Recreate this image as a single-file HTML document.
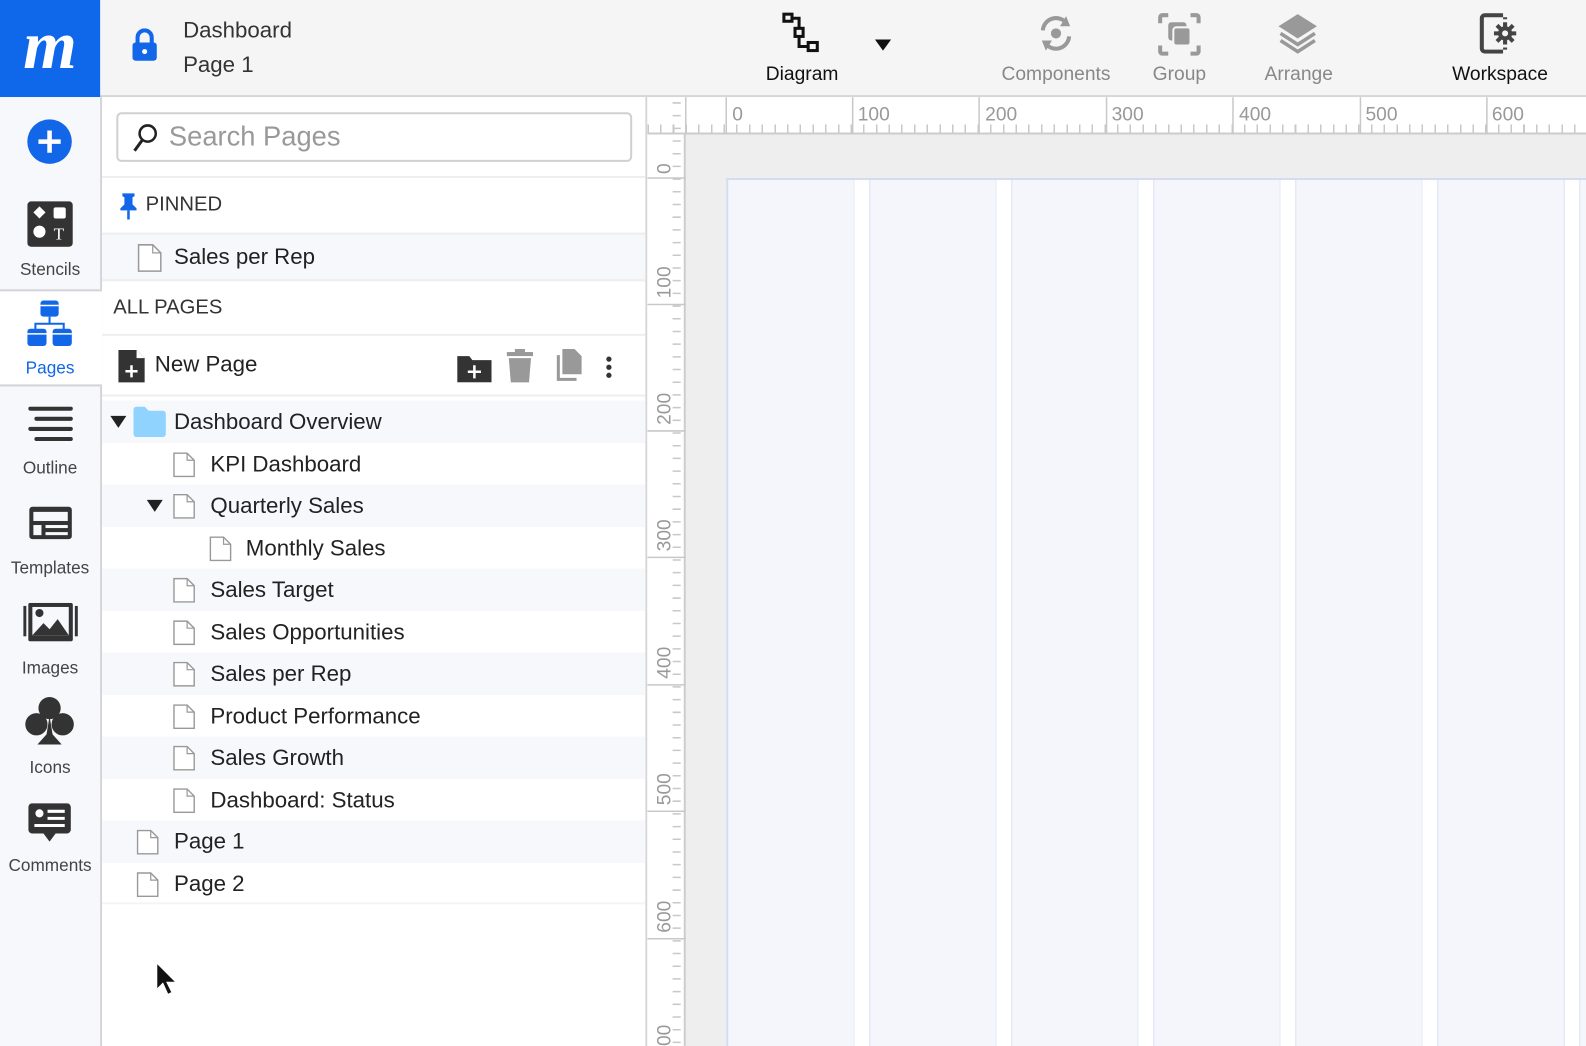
<!DOCTYPE html>
<html><head><meta charset="utf-8"><style>
*{box-sizing:border-box;margin:0;padding:0}
html,body{width:1586px;height:1046px;overflow:hidden;background:#fff;font-family:"Liberation Sans",sans-serif;color:#222}
#w{position:absolute;left:0;top:0;width:1568px;height:1034px;transform:scale(1.01148,1.0116);transform-origin:0 0;overflow:hidden}
.a{position:absolute}
.top{left:0;top:0;width:1568px;height:96px;background:#f5f5f5;border-bottom:2px solid #d6d6d6}
.logo{left:0;top:0;width:99px;height:96px;background:#0f67ea;color:#fff;font:italic bold 68px "Liberation Serif",serif;text-align:center;line-height:88px}
.rail{left:0;top:96px;width:101px;height:938px;background:#f7f8fc;border-right:2px solid #d3d3d8}
.rl{position:absolute;left:0;width:99px;text-align:center;font-size:17px;color:#444}
.panel{left:101px;top:96px;width:539px;height:938px;background:#fff;border-right:2px solid #d6d6d6}
.row{position:absolute;left:0;width:537px;height:41.5px;font-size:22px;line-height:41.5px;color:#222}
.sh{background:#f7f8fc}
.pg{position:absolute;top:9px;width:22px;height:25px}
.tb{position:absolute;font-size:19px;text-align:center}
</style></head><body><div id="w">
<div class="a top"></div>
<div class="a logo">m</div>
<svg class="a" style="left:129px;top:28px" width="28" height="34" viewBox="0 0 28 34"><path d="M7 15V9a7 7 0 0114 0v6" fill="none" stroke="#1266e8" stroke-width="4"/><rect x="2" y="14" width="24" height="18" rx="3" fill="#1266e8"/><circle cx="14" cy="23" r="2.5" fill="#fff"/></svg>
<div class="a" style="left:181px;top:17px;font-size:22px;color:#333">Dashboard</div>
<div class="a" style="left:181px;top:51px;font-size:22px;color:#333">Page 1</div>
<svg class="a" style="left:772px;top:12px" width="42" height="42" viewBox="0 0 42 42"><g fill="none" stroke="#111" stroke-width="3"><rect x="3" y="2" width="8" height="7"/><rect x="14" y="16" width="8" height="8"/><rect x="27" y="30" width="9" height="8"/><path d="M11 6h7v10M18 24v10h9"/></g></svg>
<svg class="a" style="left:865px;top:39px" width="16" height="11"><path d="M0 0h16L8 11z" fill="#111"/></svg>
<div class="tb" style="left:745px;top:63px;width:96px;color:#111">Diagram</div>
<svg class="a" style="left:1024px;top:12px" width="40" height="42" viewBox="0 0 40 42"><g fill="none" stroke="#999" stroke-width="4"><path d="M7 18a13 13 0 0124-6M33 24a13 13 0 01-24 6"/></g><path d="M30 4l4 10-10 0z M10 38l-4-10 10 0z" fill="#999"/><circle cx="20" cy="21" r="5" fill="#999"/></svg>
<div class="tb" style="left:976px;top:63px;width:136px;color:#888">Components</div>
<svg class="a" style="left:1144px;top:12px" width="44" height="44" viewBox="0 0 44 44"><g fill="none" stroke="#999" stroke-width="4"><path d="M3 11V5a2 2 0 012-2h6M33 3h6a2 2 0 012 2v6M41 33v6a2 2 0 01-2 2h-6M11 41H5a2 2 0 01-2-2v-6"/></g><rect x="11" y="10" width="18" height="18" rx="3" fill="#999"/><rect x="16" y="15" width="17" height="18" rx="3" fill="#999" stroke="#f5f5f5" stroke-width="2"/></svg>
<div class="tb" style="left:1126px;top:63px;width:80px;color:#888">Group</div>
<svg class="a" style="left:1262px;top:12px" width="42" height="42" viewBox="0 0 42 42"><path d="M21 2L40 14 21 26 2 14z" fill="#999"/><path d="M4 21l17 11 17-11M4 28l17 11 17-11" fill="none" stroke="#999" stroke-width="3.5"/></svg>
<div class="tb" style="left:1236px;top:63px;width:96px;color:#888">Arrange</div>
<svg class="a" style="left:1462px;top:13px" width="42" height="40" viewBox="0 0 42 40"><path d="M22 4V2H6a3 3 0 00-3 3v30a3 3 0 003 3h16v-2" fill="none" stroke="#444" stroke-width="4"/><path d="M26 4v2M26 34v2" stroke="#444" stroke-width="4"/><circle cx="26" cy="20" r="7" fill="#444"/><g stroke="#444" stroke-width="4"><path d="M26 9v22M15 20h22M18 12l16 16M34 12L18 28"/></g><circle cx="26" cy="20" r="3" fill="#f5f5f5"/></svg>
<div class="tb" style="left:1418px;top:63px;width:130px;color:#111">Workspace</div>

<div class="a rail"></div>
<svg class="a" style="left:26px;top:117px" width="46" height="46"><circle cx="23" cy="23" r="22" fill="#1266e8"/><path d="M23 12v22M12 23h22" stroke="#fff" stroke-width="4.5"/></svg>
<svg class="a" style="left:27px;top:199px" width="45" height="45"><rect width="45" height="45" rx="4" fill="#333"/><path d="M12 5l6 6-6 6-6-6z" fill="#fff"/><rect x="26" y="6" width="12" height="11" rx="2" fill="#fff"/><circle cx="12" cy="30" r="6" fill="#fff"/><text x="26" y="38" font-size="17" font-family="Liberation Serif" fill="#fff">T</text></svg>
<div class="rl" style="top:257px">Stencils</div>
<div class="a" style="left:0;top:286px;width:101px;height:96px;background:#fff;border-top:2px solid #d3d3d8;border-bottom:2px solid #d3d3d8"></div>
<svg class="a" style="left:27px;top:296px" width="46" height="48"><rect x="13" y="1" width="18" height="16" rx="3" fill="#1266e8"/><path d="M22 17v6M8 30v-6h28v6" stroke="#1266e8" stroke-width="2" fill="none"/><rect x="0" y="29" width="19" height="17" rx="3" fill="#1266e8"/><rect x="25" y="29" width="19" height="17" rx="3" fill="#1266e8"/><path d="M13 6h18M0 34h19M25 34h19" stroke="#fff" stroke-width="1.5"/></svg>
<div class="rl" style="top:354px;color:#1266e8">Pages</div>
<svg class="a" style="left:27px;top:402px" width="46" height="36"><g stroke="#333" stroke-width="4" stroke-linecap="round"><path d="M3 2h40M9 12h34M3 22h40M9 32h34"/></g></svg>
<div class="rl" style="top:453px">Outline</div>
<svg class="a" style="left:27px;top:499px" width="46" height="36"><rect x="2" y="2" width="42" height="32" rx="3" fill="#333"/><rect x="6" y="7" width="34" height="9" fill="#f7f8fc"/><rect x="6" y="20" width="8" height="10" fill="#f7f8fc"/><rect x="18" y="20" width="22" height="3" fill="#f7f8fc"/><rect x="18" y="27" width="22" height="3" fill="#f7f8fc"/></svg>
<div class="rl" style="top:552px">Templates</div>
<svg class="a" style="left:23px;top:596px" width="54" height="38"><rect x="0" y="3" width="3" height="30" fill="#333"/><rect x="51" y="3" width="3" height="30" fill="#333"/><rect x="5" y="0" width="44" height="38" rx="2" fill="#333"/><rect x="9" y="4" width="36" height="28" fill="#f7f8fc"/><path d="M9 32l11-12 6 6 8-10 11 16z" fill="#333"/><circle cx="16" cy="10" r="4" fill="#333"/></svg>
<div class="rl" style="top:651px">Images</div>
<svg class="a" style="left:24px;top:688px" width="50" height="50"><circle cx="25" cy="12" r="11" fill="#333"/><circle cx="12" cy="28" r="11" fill="#333"/><circle cx="38" cy="28" r="11" fill="#333"/><path d="M25 20l-3 18-9 10h24l-9-10z" fill="#333"/></svg>
<div class="rl" style="top:749px">Icons</div>
<svg class="a" style="left:28px;top:794px" width="44" height="40"><rect x="0" y="0" width="42" height="30" rx="4" fill="#333"/><path d="M15 30h12l-6 8z" fill="#333"/><circle cx="11" cy="10" r="4" fill="#fff"/><path d="M19 8h17M19 15h17M6 22h30" stroke="#fff" stroke-width="3"/></svg>
<div class="rl" style="top:846px">Comments</div>

<div class="a panel">
<div class="a" style="left:14px;top:15px;width:510px;height:49px;border:2px solid #d0d0d0;border-radius:5px"></div>
<svg class="a" style="left:30px;top:25px" width="26" height="30"><circle cx="15" cy="11" r="8" fill="none" stroke="#222" stroke-width="2.5"/><path d="M10 17L2 28" stroke="#222" stroke-width="3"/></svg>
<div class="a" style="left:66px;top:24px;font-size:27px;color:#999">Search Pages</div>
<div class="a" style="left:0;top:78px;width:537px;height:2px;background:#eee"></div>
<svg class="a" style="left:17px;top:95px" width="18" height="26"><path d="M3 0h12v3l-2 1v7l4 4v2H1v-2l4-4V4L3 3z" fill="#1266e8"/><path d="M9 17v9" stroke="#1266e8" stroke-width="2.5"/></svg>
<div class="a" style="left:43px;top:95px;font-size:20px;color:#333">PINNED</div>
<div class="a sh" style="left:0;top:134px;width:537px;height:48px;border-top:2px solid #eee;border-bottom:2px solid #eee"></div>
<svg class="a" style="left:35px;top:145px" width="24" height="28"><path d="M1 1h14l8 8v18H1z" fill="#fff" stroke="#999" stroke-width="1.5"/><path d="M15 1v8h8" fill="none" stroke="#999" stroke-width="1.2"/></svg>
<div class="a" style="left:71px;top:145px;font-size:22px">Sales per Rep</div>
<div class="a" style="left:11px;top:197px;font-size:20px;color:#333">ALL PAGES</div>
<div class="a" style="left:0;top:234px;width:537px;height:2px;background:#eee"></div>
<svg class="a" style="left:16px;top:249px" width="28" height="34"><path d="M0 1h18l8 8v24H0z" fill="#333"/><path d="M18 1v8h8" fill="#fff"/><path d="M13 16v12M7 22h12" stroke="#fff" stroke-width="2.5"/></svg>
<div class="a" style="left:52px;top:251px;font-size:22px;color:#222">New Page</div>
<svg class="a" style="left:351px;top:254px" width="34" height="28"><path d="M0 2h12l3 4h19v22H0z" fill="#333"/><path d="M17 11v13M10.5 17.5h13" stroke="#fff" stroke-width="2.5"/></svg>
<svg class="a" style="left:400px;top:249px" width="26" height="34"><rect x="0" y="3" width="26" height="4" fill="#999"/><rect x="8" y="0" width="10" height="4" fill="#999"/><path d="M2 9h22l-2 24H4z" fill="#999"/></svg>
<svg class="a" style="left:447px;top:249px" width="28" height="32"><path d="M8 0h12l7 7v18H8z" fill="#999"/><path d="M4 6v24h18" fill="none" stroke="#999" stroke-width="3"/></svg>
<svg class="a" style="left:497px;top:256px" width="8" height="24"><circle cx="4" cy="3" r="2.6" fill="#333"/><circle cx="4" cy="11" r="2.6" fill="#333"/><circle cx="4" cy="19" r="2.6" fill="#333"/></svg>
<div class="a" style="left:0;top:294px;width:537px;height:2px;background:#eee"></div>

<div class="row sh" style="top:300px"><svg class="a" style="left:8px;top:15px" width="16" height="12"><path d="M0 0h16L8 12z" fill="#222"/></svg><svg class="a" style="left:31px;top:6px" width="32" height="30"><path d="M0 3a3 3 0 013-3h8l4 4h14a3 3 0 013 3v20a3 3 0 01-3 3H3a3 3 0 01-3-3z" fill="#8fd3fe"/></svg><span class="a" style="left:71px">Dashboard Overview</span></div>
<div class="row" style="top:341.5px"><svg class="pg" style="left:70px" viewBox="0 0 22 25"><path d="M1 1h13l7 7v16H1z" fill="#fff" stroke="#999" stroke-width="1.4"/><path d="M14 1v7h7" fill="none" stroke="#999" stroke-width="1.2"/></svg><span class="a" style="left:107px">KPI Dashboard</span></div>
<div class="row sh" style="top:383px"><svg class="a" style="left:44px;top:15px" width="16" height="12"><path d="M0 0h16L8 12z" fill="#222"/></svg><svg class="pg" style="left:70px" viewBox="0 0 22 25"><path d="M1 1h13l7 7v16H1z" fill="#fff" stroke="#999" stroke-width="1.4"/><path d="M14 1v7h7" fill="none" stroke="#999" stroke-width="1.2"/></svg><span class="a" style="left:107px">Quarterly Sales</span></div>
<div class="row" style="top:424.5px"><svg class="pg" style="left:106px" viewBox="0 0 22 25"><path d="M1 1h13l7 7v16H1z" fill="#fff" stroke="#999" stroke-width="1.4"/><path d="M14 1v7h7" fill="none" stroke="#999" stroke-width="1.2"/></svg><span class="a" style="left:142px">Monthly Sales</span></div>
<div class="row sh" style="top:466px"><svg class="pg" style="left:70px" viewBox="0 0 22 25"><path d="M1 1h13l7 7v16H1z" fill="#fff" stroke="#999" stroke-width="1.4"/><path d="M14 1v7h7" fill="none" stroke="#999" stroke-width="1.2"/></svg><span class="a" style="left:107px">Sales Target</span></div>
<div class="row" style="top:507.5px"><svg class="pg" style="left:70px" viewBox="0 0 22 25"><path d="M1 1h13l7 7v16H1z" fill="#fff" stroke="#999" stroke-width="1.4"/><path d="M14 1v7h7" fill="none" stroke="#999" stroke-width="1.2"/></svg><span class="a" style="left:107px">Sales Opportunities</span></div>
<div class="row sh" style="top:549px"><svg class="pg" style="left:70px" viewBox="0 0 22 25"><path d="M1 1h13l7 7v16H1z" fill="#fff" stroke="#999" stroke-width="1.4"/><path d="M14 1v7h7" fill="none" stroke="#999" stroke-width="1.2"/></svg><span class="a" style="left:107px">Sales per Rep</span></div>
<div class="row" style="top:590.5px"><svg class="pg" style="left:70px" viewBox="0 0 22 25"><path d="M1 1h13l7 7v16H1z" fill="#fff" stroke="#999" stroke-width="1.4"/><path d="M14 1v7h7" fill="none" stroke="#999" stroke-width="1.2"/></svg><span class="a" style="left:107px">Product Performance</span></div>
<div class="row sh" style="top:632px"><svg class="pg" style="left:70px" viewBox="0 0 22 25"><path d="M1 1h13l7 7v16H1z" fill="#fff" stroke="#999" stroke-width="1.4"/><path d="M14 1v7h7" fill="none" stroke="#999" stroke-width="1.2"/></svg><span class="a" style="left:107px">Sales Growth</span></div>
<div class="row" style="top:673.5px"><svg class="pg" style="left:70px" viewBox="0 0 22 25"><path d="M1 1h13l7 7v16H1z" fill="#fff" stroke="#999" stroke-width="1.4"/><path d="M14 1v7h7" fill="none" stroke="#999" stroke-width="1.2"/></svg><span class="a" style="left:107px">Dashboard: Status</span></div>
<div class="row sh" style="top:715px"><svg class="pg" style="left:34px" viewBox="0 0 22 25"><path d="M1 1h13l7 7v16H1z" fill="#fff" stroke="#999" stroke-width="1.4"/><path d="M14 1v7h7" fill="none" stroke="#999" stroke-width="1.2"/></svg><span class="a" style="left:71px">Page 1</span></div>
<div class="row" style="top:756.5px;border-bottom:2px solid #f3f4f8"><svg class="pg" style="left:34px" viewBox="0 0 22 25"><path d="M1 1h13l7 7v16H1z" fill="#fff" stroke="#999" stroke-width="1.4"/><path d="M14 1v7h7" fill="none" stroke="#999" stroke-width="1.2"/></svg><span class="a" style="left:71px">Page 2</span></div>
<svg class="a" style="left:52px;top:855px" width="24" height="36"><path d="M2 1v26l6-6 5 11 4-2-5-10h9z" fill="#111" stroke="#fff" stroke-width="1"/></svg>
</div>

<div class="a" style="left:640px;top:96px;width:928px;height:938px;background:#eeeeee"></div>
<div class="a" style="left:640px;top:96px;width:928px;height:37px;background:#fff;border-bottom:2px solid #ccc;background-image:repeating-linear-gradient(90deg,#c8c8c8 0 1.5px,transparent 1.5px 12.55px);background-size:100% 8px;background-position:0 27px;background-repeat:no-repeat;background-origin:border-box"></div>
<div class="a" style="left:640px;top:133px;width:38px;height:901px;background:#fff;border-right:2px solid #ccc"></div>
<svg class="a" style="left:640px;top:96px" width="928" height="938">
<g stroke="#c8c8c8" stroke-width="1.5">
<path d="M38 0v37M78 0v37M203 0v37M328 0v37M454 0v37M579 0v37M705 0v37M830 0v37"/>
<path d="M0 80h38M0 205h38M0 330h38M0 455h38M0 581h38M0 706h38M0 832h38"/>
</g>
<g font-size="19" fill="#999" font-family="Liberation Sans">
<text x="84" y="23">0</text><text x="208" y="23">100</text><text x="334" y="23">200</text><text x="459" y="23">300</text><text x="585" y="23">400</text><text x="710" y="23">500</text><text x="835" y="23">600</text>
<text transform="translate(23,76) rotate(-90)">0</text>
<text transform="translate(23,199) rotate(-90)">100</text>
<text transform="translate(23,324) rotate(-90)">200</text>
<text transform="translate(23,449) rotate(-90)">300</text>
<text transform="translate(23,575) rotate(-90)">400</text>
<text transform="translate(23,700) rotate(-90)">500</text>
<text transform="translate(23,826) rotate(-90)">600</text>
<text transform="translate(23,938) rotate(-90)">00</text>
</g>
<path d="M29 0V938" stroke="#c8c8c8" stroke-width="8" stroke-dasharray="1.5 11.05" transform="translate(0,5)"/>
</svg>
<div class="a" style="left:718px;top:176px;width:850px;height:858px;background:#fff;border-top:2px solid #d5dcef;border-left:2px solid #d5dcef"></div>
<div class="a" style="left:720px;top:178px;width:848px;height:856px;background-image:repeating-linear-gradient(90deg,#f5f6fc 0 124px,#e3e9f7 124px 125px,#fff 125px 139px,#e3e9f7 139px 140.4px)"></div>
</div></body></html>
